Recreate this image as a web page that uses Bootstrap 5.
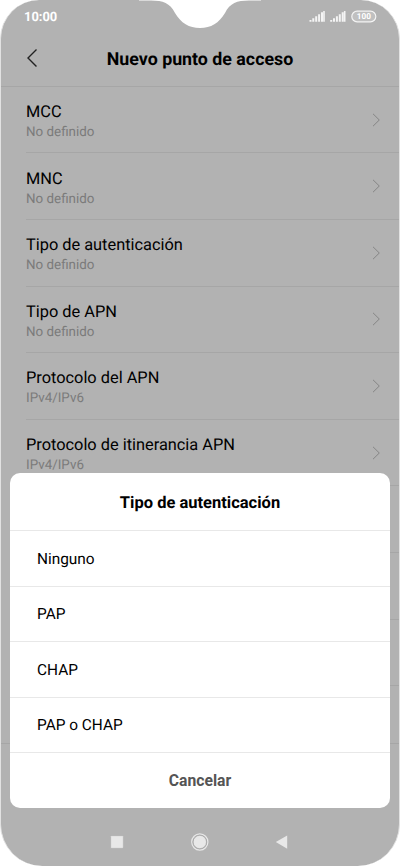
<!DOCTYPE html>
<html lang="es">
<head>
<meta charset="utf-8">
<meta name="viewport" content="width=device-width, initial-scale=1">
<title>Nuevo punto de acceso</title>
<link href="https://cdn.jsdelivr.net/npm/bootstrap@5.3.0/dist/css/bootstrap.min.css" rel="stylesheet">
<style>
body { font-family: Roboto, sans-serif; background: #fff; color: #000; line-height: 1; text-rendering: geometricPrecision; }
.phone { width: 400px; height: 866px; background: #b2b2b2; border: solid #e2e2e2; border-width: 0 1px; border-radius: 39px 39px 42px 42px; }
.notch { left: 138px; top: 0; }
.status { height: 32px; padding: 1px 23px 0 23px; font-size: 12.9px; }
.status span { padding-top: 3px; }
.status svg { margin-right: -1px; margin-top: -1px; }
.topbar { height: 54.9px; padding-left: 25px; border-bottom: 1px solid #a6a6a6; }
.topbar h1 { font-size: 17.8px; left: 0; right: 0; top: 17px; }
.topbar svg { margin-top: -1px; }
.setting { height: 66.6px; margin-left: 25px; padding-right: 18px; border-bottom: 1px solid #a6a6a6; }
.setting-text { padding-top: 3.6px; }
.setting-name { font-size: 16.35px; line-height: 20px; }
.setting-value { font-size: 13.4px; line-height: 16px; color: #7b7b7b; margin-top: 3px; }
.sep { height: 57.6px; border-bottom: 1px solid #a6a6a6; }
.sheet { left: 9px; right: 9px; top: 473px; height: 335px; background: #fff; border-radius: 10px; }
.sheet h2 { height: 58px; font-size: 16.5px; padding-top: 4px; border-bottom: 1px solid #e8e8e8; }
.option { height: 55.5px; font-size: 15.4px; padding: 2px 0 0 27px; border-bottom: 1px solid #e8e8e8; }
.cancel { height: 55px; font-size: 15.7px; color: #555; background: none; border: 0; padding: 0; }
.navkeys { left: 0; top: 828px; }
</style>
</head>
<body>
<div class="phone position-relative overflow-hidden">
  <svg class="notch position-absolute" width="122" height="29" viewBox="0 0 122 29"><path d="M0 0H122V.5H110C98 .5 91 3 86 13C80 23 72 28 61 28S42 23 36 13C31 3 24 .5 12 .5H0Z" fill="#fff"/></svg>
  <div class="status d-flex align-items-center justify-content-between text-white fw-bold">
    <span>10:00</span>
    <svg width="68" height="14" viewBox="0 0 68 14" fill="#f4f4f4">
      <g id="signal"><path d="M.5 11h2v1.7h-2zM3.3 9.3h2v3.4h-2zM6.2 7.3h2v5.4h-2zM9.1 5.3h2v7.4h-2zM12 3.3h2v9.4h-2zM14.2 2h1.6v10.7h-1.6z"/></g>
      <use href="#signal" x="20.7"/>
      <rect x="42.8" y="2.2" width="24" height="10.6" rx="5.3" fill="#c0c0c0" stroke="#f4f4f4" stroke-width="1.2"/>
      <text x="54.8" y="10.4" font-size="8.2" font-weight="700" text-anchor="middle" fill="#fff">100</text>
    </svg>
  </div>
  <header class="topbar d-flex align-items-center position-relative">
    <svg width="12" height="20" viewBox="0 0 12 20" fill="none" stroke="#222" stroke-width="1.4"><path d="M10.5 1.5L2 10L10.5 18.5"/></svg>
    <h1 class="position-absolute text-center fw-bold m-0">Nuevo punto de acceso</h1>
  </header>
  <main>
    <div class="setting d-flex align-items-center justify-content-between"><div class="setting-text"><div class="setting-name">MCC</div><div class="setting-value">No definido</div></div><svg width="9" height="14" viewBox="0 0 9 14" fill="none" stroke="#858585"><path d="M1 .8L7.3 7L1 13.2"/></svg></div>
    <div class="setting d-flex align-items-center justify-content-between"><div class="setting-text"><div class="setting-name">MNC</div><div class="setting-value">No definido</div></div><svg width="9" height="14" viewBox="0 0 9 14" fill="none" stroke="#858585"><path d="M1 .8L7.3 7L1 13.2"/></svg></div>
    <div class="setting d-flex align-items-center justify-content-between"><div class="setting-text"><div class="setting-name">Tipo de autenticación</div><div class="setting-value">No definido</div></div><svg width="9" height="14" viewBox="0 0 9 14" fill="none" stroke="#858585"><path d="M1 .8L7.3 7L1 13.2"/></svg></div>
    <div class="setting d-flex align-items-center justify-content-between"><div class="setting-text"><div class="setting-name">Tipo de APN</div><div class="setting-value">No definido</div></div><svg width="9" height="14" viewBox="0 0 9 14" fill="none" stroke="#858585"><path d="M1 .8L7.3 7L1 13.2"/></svg></div>
    <div class="setting d-flex align-items-center justify-content-between"><div class="setting-text"><div class="setting-name">Protocolo del APN</div><div class="setting-value">IPv4/IPv6</div></div><svg width="9" height="14" viewBox="0 0 9 14" fill="none" stroke="#858585"><path d="M1 .8L7.3 7L1 13.2"/></svg></div>
    <div class="setting d-flex align-items-center justify-content-between"><div class="setting-text"><div class="setting-name">Protocolo de itinerancia APN</div><div class="setting-value">IPv4/IPv6</div></div><svg width="9" height="14" viewBox="0 0 9 14" fill="none" stroke="#858585"><path d="M1 .8L7.3 7L1 13.2"/></svg></div>
    <div class="setting"></div>
    <div class="setting"></div>
    <div class="setting"></div>
    <div class="sep"></div>
  </main>
  <section class="sheet position-absolute overflow-hidden">
    <h2 class="d-flex align-items-center justify-content-center fw-bold m-0">Tipo de autenticación</h2>
    <div class="option d-flex align-items-center">Ninguno</div>
    <div class="option d-flex align-items-center">PAP</div>
    <div class="option d-flex align-items-center">CHAP</div>
    <div class="option d-flex align-items-center">PAP o CHAP</div>
    <button type="button" class="cancel w-100 fw-bold">Cancelar</button>
  </section>
  <svg class="navkeys position-absolute" width="398" height="28" viewBox="1 0 398 28" fill="#e8e8e8">
    <rect x="110.7" y="7.7" width="12.6" height="12.6" rx=".6" stroke="#a4a4a4" stroke-width=".4"/>
    <circle cx="199.8" cy="14" r="8.1" fill="none" stroke="#e8e8e8" stroke-width="1.2"/>
    <circle cx="199.8" cy="14" r="6.7" stroke="#999" stroke-width=".6"/>
    <path d="M275.8 14L287.2 7.6V20.7Z"/>
  </svg>
</div>
<script src="https://cdn.jsdelivr.net/npm/bootstrap@5.3.0/dist/js/bootstrap.bundle.min.js"></script>
</body>
</html>
